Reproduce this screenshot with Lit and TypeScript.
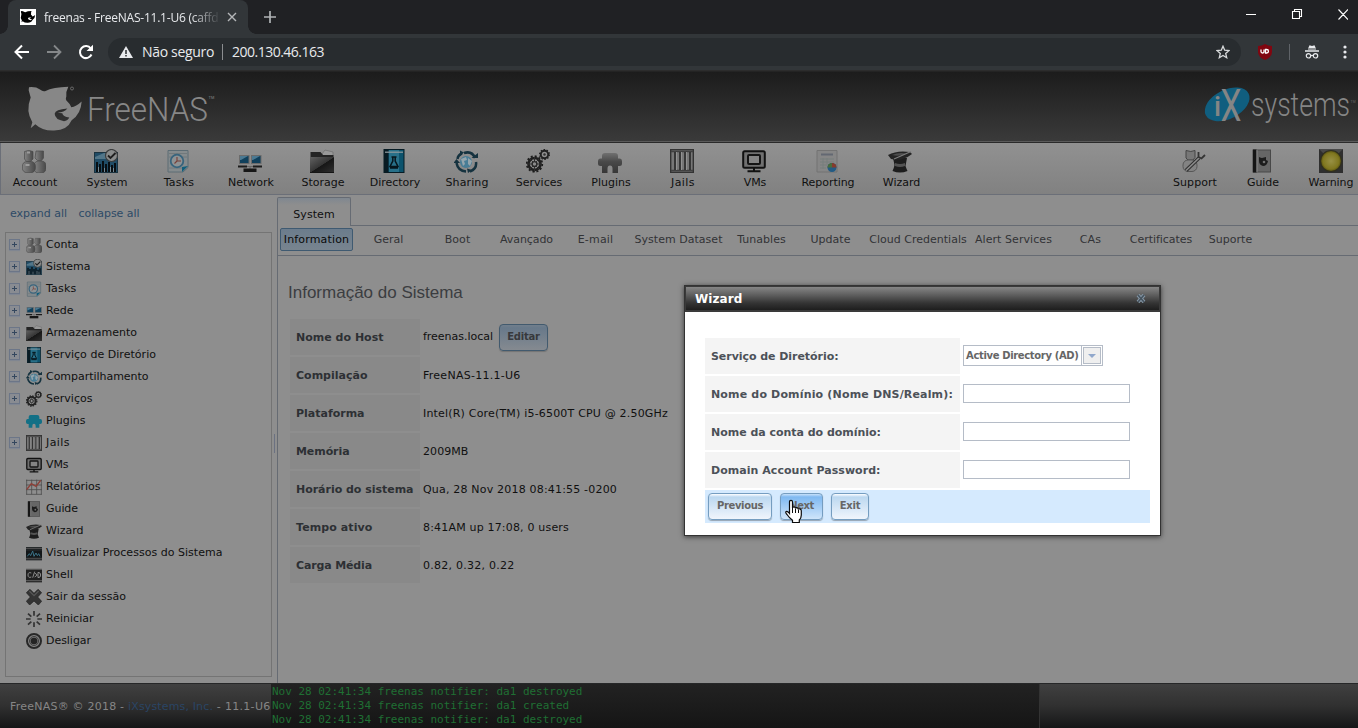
import { LitElement, html, svg, css, TemplateResult } from "lit";
import { customElement, property } from "lit/decorators.js";
import { styleMap } from "lit/directives/style-map.js";

const REG = '11px "DejaVu Sans"';
const BOLD = 'bold 11px "DejaVu Sans"';
const SMALL = 'bold 10px "DejaVu Sans"';
const CHROME = '"Open Sans"';

const ctx = document.createElement("canvas").getContext("2d")!;

// Tracks a label so that it takes the given advance width.
function fit(text: string, width: number, font = REG): TemplateResult {
  ctx.font = font;
  const gap = (width - ctx.measureText(text).width) / text.length;
  return html`<span style=${styleMap({ letterSpacing: gap.toFixed(3) + "px", whiteSpace: "pre" })}>${text}</span>`;
}

// Condenses a logo word horizontally to the given width.
function logoWord(text: string, x: number, y: number, width: number, size: number, weight = 300) {
  ctx.font = `${weight} ${size}px Roboto`;
  const k = width / ctx.measureText(text).width;
  return svg`<text transform=${`translate(${x} ${y}) scale(${k.toFixed(4)} 1)`} font-family="Roboto" font-weight=${weight} font-size=${size}>${text}</text>`;
}

const gearTeeth = (cx: number, cy: number, r: number, n: number, w: number) =>
  svg`<circle cx=${cx} cy=${cy} r=${r} fill="none" stroke="#1d1d1d" stroke-width=${w}
    stroke-dasharray=${`${(Math.PI * r) / n} ${(Math.PI * r) / n}`}/>`;

const ICONS: Record<string, unknown> = {
  account: svg`
    <defs><linearGradient id="ac" x1="0" x2="1"><stop offset="0" stop-color="#858585"/><stop offset="1" stop-color="#484848"/></linearGradient></defs>
    <g fill="url(#ac)" stroke="#4b4b4b" stroke-width=".7">
    <path d="M14 2h7.500v7l-2 2.500h-4L13 9z"/><rect x="12" y="12" width="12" height="12" rx="4.500"/>
    <path d="M2.500 2.500q4-2 8.500 0V10l-2.500 2.500h-4L2.500 10z"/><rect x=".4" y="12.500" width="13" height="11.200" rx="4.500"/></g>
    <path d="M5 3.500h3M3.500 16h4" stroke="#9c9c9c" stroke-width="2"/>`,
  system: svg`
    <rect x=".5" y="3.500" width="23" height="20" fill="#204c66" stroke="#1b3340"/>
    <path d="M1 8L10 4h13v6H1z" fill="#527689"/>
    <path d="M3 23V13M6 23V15M9 23V12M12 23V15M15 23V13M18 23V16M21 23V14" stroke="#080e12" stroke-width="2"/>
    <path d="M4.500 23V18M10.500 23V19M16.500 23V18M19.500 23v-4" stroke="#8a989e" stroke-width=".8"/>
    <circle cx="17.500" cy="6.500" r="6" fill="#898b8b" stroke="#3b3d3e" stroke-width="1.200"/>
    <path d="M14 6.500l2.500 2.500L21.500 4" fill="none" stroke="#1e1e1e" stroke-width="1.800"/>`,
  tasks: svg`
    <path d="M2 1.500h20v17l-5 4.500H2z" fill="#858b8d" stroke="#5c6c74"/>
    <path d="M3 4.500h18M3 8h18M3 19h13" stroke="#71797c"/>
    <circle cx="11" cy="12" r="6.300" fill="#8e9294" stroke="#38647d" stroke-width="1.800"/>
    <path d="M11 8v4h4M11 12l-2.500 2.500" fill="none" stroke="#773f38" stroke-width="1.100"/>
    <path d="M16 23v-5l6-1z" fill="#105e7c"/>`,
  network: svg`
    <rect x="1.500" y="6.500" width="9.500" height="8" fill="#10405c" stroke="#6b6b6b"/><rect x="13.500" y="6.500" width="9.500" height="8" fill="#10405c" stroke="#6b6b6b"/>
    <path d="M2 7h8l-7 4H2zM14 7h8l-7 4h-1z" fill="#4b7992"/>
    <path d="M0 17.500h9M15 17.500h9" stroke="#1c1c1c" stroke-width="1.800"/><path d="M9 17.500h6M12 17v4" stroke="#656565"/>
    <rect x="5.500" y="19.500" width="13" height="3.500" fill="#171717"/>`,
  storage: svg`
    <defs><linearGradient id="st" x1="0" x2="1" y1="0" y2="1"><stop offset="0" stop-color="#626262"/><stop offset=".5" stop-color="#353535"/><stop offset=".52" stop-color="#161616"/><stop offset="1" stop-color="#303030"/></linearGradient></defs>
    <path d="M12 5l3-4 8 2v6H12z" fill="#999" stroke="#666" stroke-width=".6"/>
    <path d="M.5 3h10l2.500 3H23.500V9H.5z" fill="#242424"/><rect y="8" width="24" height="15.500" fill="url(#st)"/><path d="M0 23.500h24" stroke="#151515"/>`,
  directory: svg`
    <rect x="2" y=".5" width="20" height="23" fill="#0c536d" stroke="#071c25"/><path d="M7 1h10v22H7z" fill="#287089"/>
    <path d="M2 .5h4.500V24H2z" fill="#081b23"/><path d="M3 3.200h18" stroke="#89979b" stroke-width="1.300"/>
    <path d="M9.500 8h5M10.800 8v4L8 17.500h8L13.200 12V8M8 19h8" fill="none" stroke="#06161d" stroke-width="1.500"/>`,
  sharing: svg`
    <circle cx="12" cy="13" r="6" fill="#487d96"/><path d="M7 10l5-2 1 3-3 1 1 3-2 2zM14 9l4 3-2 5-2-2z" fill="#94a5ad"/>
    <path d="M10 4q8-2.500 11 5M22 13q1 7-6 9.500M12 22.500Q4 22 2.500 14M3.500 10Q4 6 8 4.500" fill="none" stroke="#15323f" stroke-width="2.500"/>
    <path d="M17.500 9h6.500v-5zM13 19.500l1 4.500 4-3zM-.5 14l3-4 3.500 4zM6 1.500v5.500l4-3.500z" fill="#15323f"/>`,
  services: svg`
    <circle cx="8.500" cy="15" r="6" fill="none" stroke="#202020" stroke-width="2.700"/>${gearTeeth(8.5, 15, 7.8, 12, 1.7)}
    <circle cx="8.500" cy="15" r="2.400" fill="none" stroke="#292929" stroke-width="1.400"/><path d="M8.500 8v4M8.500 18v5M2 15h4M11 15h4M4 10l3 3M10 17l3 3M13 10l-3 3M4 20l3-3" stroke="#303030"/>
    <circle cx="18.500" cy="5.500" r="3.700" fill="none" stroke="#202020" stroke-width="1.900"/>${gearTeeth(18.5, 5.5, 4.9, 10, 1.2)}<circle cx="18.500" cy="5.500" r="1.200" fill="#333"/>`,
  plugins: svg`
    <defs><linearGradient id="pg" x2="0" y2="1"><stop offset="0" stop-color="#707070"/><stop offset=".45" stop-color="#484848"/><stop offset="1" stop-color="#373737"/></linearGradient></defs>
    <path d="M4 9.500V7q0-3 3-3h10q3 0 3 3v2.500h1.500q2.500 0 2.500 3v2q0 2.500-2.500 2.500H20v7h-5.500v-4.500q0-3-2.500-3t-2.500 3V24H4v-7H2.500Q0 17 0 14.500v-2q0-3 2.500-3z" fill="url(#pg)"/>`,
  pluginsBlue: svg`
    <path d="M4 9V6q0-3 3-3h10q3 0 3 3v3h1.500q2.500 0 2.500 3v2q0 2.500-2.500 2.500H20V22h-5.500v-3q0-3-2.500-3t-2.500 3v3H4v-5.500H2.500Q0 16.500 0 14v-2q0-3 2.500-3z" fill="#127086"/>`,
  jails: svg`
    <rect x=".7" y=".7" width="22.600" height="22.600" fill="#777" stroke="#333" stroke-width="1.400"/><path d="M1 2.500h22M1 21.500h22" stroke="#414141" stroke-width="1.300"/>
    <path d="M5 3v18M10 3v18M15 3v18M20 3v18" stroke="#303030" stroke-width="1.800"/><path d="M6.500 3v18M11.500 3v18M16.500 3v18" stroke="#929292"/>`,
  vms: svg`
    <rect x="1.200" y="2.200" width="21.600" height="16.600" rx="1.500" fill="#707070" stroke="#111" stroke-width="2"/>
    <rect x="6" y="6" width="12" height="9" rx="1" fill="#848484" stroke="#151515" stroke-width="2"/><path d="M12 19v3M5.500 22.300h13" stroke="#111" stroke-width="2"/>`,
  reporting: svg`
    <path d="M2 1.500h20V23H2z" fill="#868686" stroke="#737373"/><path d="M6 5.500h12" stroke="#636872" stroke-width="2"/>
    <path d="M5 10h14M5 13h14M5 16h7M5 19h6M8 9v11M12 9v6" stroke="#777e7d"/>
    <circle cx="17" cy="18.500" r="4.500" fill="#235b84"/><path d="M17 18.500V14a4.500 4.500 0 0 1 4.500 4.500z" fill="#863a2c"/><path d="M17 18.500h-4.500A4.500 4.500 0 0 1 17 14z" fill="#486d3c"/>`,
  graph: svg`
    <path d="M1 1v22M8.500 1v22M16 1v22M23 1v22M0 2h24M0 9h24M0 16h24M0 23h24" stroke="#4c4c4c" stroke-width="1.200"/><path d="M1 16l7-9 7 4 7-9" fill="none" stroke="#8e3f37" stroke-width="2.200"/>`,
  wizard: svg`
    <path d="M5 9h14l-1.500 8q1 3 2 5-7.500 3-15 0Q6 19 6.500 16z" fill="#1d1d1d"/><path d="M7 14q5 2 10 0v3q-5 2-10 0z" fill="#535353"/>
    <path d="M0 6q9-5 22-3l2 2Q14 13 3 10z" fill="#242424"/><path d="M4 6q7-3 14-1.500-6 3.500-14 1.500z" fill="#4d4d4d"/><path d="M6 10L23 2.500" stroke="#7d7d7d" stroke-width="1.200"/>`,
  support: svg`
    <path d="M4 1.500q5 2 9 0v7l-2 2.500H6L4 9z" fill="#777" stroke="#454545"/><rect x="1" y="11" width="14" height="11.500" rx="5" fill="#838383" stroke="#575757"/>
    <path d="M4 21.500L17 9" stroke="#303030" stroke-width="3.800"/><path d="M4 21.500L17 9" stroke="#8d8d8d" stroke-width="1.600"/>
    <path d="M16.500 3v5l3 1.500L23 6" fill="none" stroke="#343434" stroke-width="1.800"/>`,
  guide: svg`
    <rect x="3" y="1" width="17.500" height="22" fill="#666" stroke="#484848"/><path d="M3 .500h3.500v23H3z" fill="#151515"/><path d="M7 1v22" stroke="#888"/>
    <path d="M9 8q2 1 3 1l4-1v3l2 1q-1 5-5 5-4-1-4-5z" fill="#1c1c1c"/><circle cx="14" cy="13" r="1.300" fill="#707070"/>`,
  warning: svg`
    <defs><radialGradient id="wr"><stop offset="0" stop-color="#989044"/><stop offset=".75" stop-color="#80771f"/><stop offset="1" stop-color="#56500f"/></radialGradient></defs>
    <path d="M0 0h24v24H0z" fill="#2f2f2f"/><path d="M0 0h24L12 12z" fill="#494949"/><circle cx="12" cy="12" r="10.500" fill="url(#wr)" stroke="#302f1f" stroke-width="1.200"/>`,
  processes: svg`
    <path d="M0 3h24v20H0z" fill="#1e2224"/><path d="M0 5h24" stroke="#555" stroke-width="1.500"/><path d="M0 9h24v9H0z" fill="#131719"/>
    <path d="M2 17l3-4 2 3 3-7 2 8 3-5 2 4 2-3 2 4" fill="none" stroke="#3b7286" stroke-width="1.500"/><path d="M0 20.500h24" stroke="#464646" stroke-width="2"/>`,
  shell: svg`
    <path d="M0 3h24v20H0z" fill="#202020"/><path d="M0 3.500h24M0 20.500h24" stroke="#565656" stroke-width="2"/>
    <path d="M8 9Q3 7 3 12t5 3M10 16l3-9M13 9l4 3-4 3M18 8v8M18 8q4 0 4 4t-4 4" fill="none" stroke="#8b8b8b" stroke-width="1.500"/>`,
  logout: svg`
    <path d="M6 .500l6 6 6-6 5.500 5-6 6.500 6 6.500-5 5.500-6.500-6-6.500 6L.5 18.500l6-6.500-6-6.500z" fill="#343434" stroke="#202020"/><path d="M5 3l7 7 7-7" fill="none" stroke="#565656" stroke-width="2"/>`,
  restart: svg`
    <path d="M12 0v7M12 17v7M0 12h7M17 12h7M3 4l5 4.500M16 16l5 4.500M21 4l-5 4.500M8 16l-5 4.500" stroke="#343434" stroke-width="2.600"/>`,
  power: svg`
    <circle cx="12" cy="12" r="10.500" fill="#858585" stroke="#282828" stroke-width="3"/><circle cx="12" cy="12" r="6.800" fill="#747474" stroke="#333" stroke-width="1.200"/><circle cx="12" cy="12" r="5" fill="#242424"/>`,
};

@customElement("nas-icon")
class NasIcon extends LitElement {
  @property() name = "";
  @property({ type: Number }) size = 24;
  static styles = css`
    :host { display: block; flex: none; line-height: 0; }
  `;
  render() {
    return html`<svg width=${this.size} height=${this.size} viewBox="0 0 24 24">${ICONS[this.name]}</svg>`;
  }
}

const NAV: [string, string, number, number][] = [
  ["account", "Account", 44.5, 72], ["system", "System", 41, 72], ["tasks", "Tasks", 30.5, 72],
  ["network", "Network", 46, 72], ["storage", "Storage", 43, 72], ["directory", "Directory", 50.5, 72],
  ["sharing", "Sharing", 43, 72], ["services", "Services", 46.5, 72], ["plugins", "Plugins", 39.5, 72],
  ["jails", "Jails", 24, 72], ["vms", "VMs", 22.5, 72], ["reporting", "Reporting", 53, 74],
  ["wizard", "Wizard", 37.5, 73],
];
const NAV_RIGHT: [string, string, number, number][] = [
  ["support", "Support", 44, 68], ["guide", "Guide", 32, 68], ["warning", "Warning", 45, 68],
];
const TREE: [string, string, number, boolean][] = [
  ["account", "Conta", 32.5, true], ["system", "Sistema", 44.5, true], ["tasks", "Tasks", 30.5, true],
  ["network", "Rede", 27.5, true], ["storage", "Armazenamento", 91, true], ["directory", "Serviço de Diretório", 110, true],
  ["sharing", "Compartilhamento", 102.5, true], ["services", "Serviços", 46.5, true], ["pluginsBlue", "Plugins", 39.5, false],
  ["jails", "Jails", 24, true], ["vms", "VMs", 22.5, false], ["graph", "Relatórios", 54.5, false],
  ["guide", "Guide", 32, false], ["wizard", "Wizard", 37.5, false],
  ["processes", "Visualizar Processos do Sistema", 176.5, false], ["shell", "Shell", 27, false],
  ["logout", "Sair da sessão", 80, false], ["restart", "Reiniciar", 47.5, false], ["power", "Desligar", 45, false],
];
const SUBTABS: [string, number, number][] = [
  ["Geral", 29.5, 69], ["Boot", 25.5, 69], ["Avançado", 53, 69], ["E-mail", 35.5, 69], ["System Dataset", 88, 97],
  ["Tunables", 48.5, 69], ["Update", 40, 69], ["Cloud Credentials", 97.5, 106], ["Alert Services", 77, 85],
  ["CAs", 21.5, 69], ["Certificates", 62.5, 72], ["Suporte", 43.5, 67],
];
const INFO: [string, number, string, number][] = [
  ["Nome do Host", 87.5, "freenas.local", 70], ["Compilação", 71.5, "FreeNAS-11.1-U6", 97.5],
  ["Plataforma", 68.5, "Intel(R) Core(TM) i5-6500T CPU @ 2.50GHz", 245], ["Memória", 53.5, "2009MB", 45.5],
  ["Horário do sistema", 117.5, "Qua, 28 Nov 2018 08:41:55 -0200", 194], ["Tempo ativo", 76.500, "8:41AM up 17:08, 0 users", 146],
  ["Carga Média", 76, "0.82, 0.32, 0.22", 91.5],
];
const FIELDS: [string, number][] = [
  ["Nome do Domínio (Nome DNS/Realm):", 242], ["Nome da conta do domínio:", 170], ["Domain Account Password:", 169.5],
];
const SHARK = svg`<path fill-rule="evenodd" d="M3 2Q24 0 36 9q8 7 15 5Q76 2 121 1q-8 15-6 29-4 9 3 15 10 9 12 17 14-1 31-17-2 38-30 56-13 30-52 31-35 2-57-19L8 125l5-18Q-8 74 8 33L2 11zM118 66Q82 69 80 82q1 18 28 22 12-2 16-11-20-3-21-13-10 0-14-1 20-2 29-13z"/>`;

@customElement("chrome-bar")
class ChromeBar extends LitElement {
  static styles = css`
    :host { display: block; height: 72px; background: #202124; font-family: "Open Sans", "Noto Sans", sans-serif; color: #e8eaed; }
    .strip { display: flex; height: 34px; align-items: stretch; }
    .tab { width: 240px; margin-left: 8px; border-radius: 8px 8px 0 0; background: #323639; display: flex; align-items: center; box-sizing: border-box; padding-left: 12px; font-size: 12px; position: relative; }
    .tab::after, .tab::before { content: ""; position: absolute; bottom: 0; width: 8px; height: 8px; }
    .tab::after { left: 100%; background: radial-gradient(circle at 100% 0, #202124 7.500px, #323639 8px); }
    .tab::before { right: 100%; background: radial-gradient(circle at 0 0, #202124 7.500px, #323639 8px); }
    .fav { background: #fff; width: 16px; height: 16px; margin-right: 8px; }
    .title { width: 175px; overflow: hidden; -webkit-mask-image: linear-gradient(90deg, #000 84%, transparent 101%); }
    .x { margin-left: 8px; }
    .plus { margin: 11px 0 0 16px; }
    .win { margin-left: auto; padding: 8px 10px 0 0; display: flex; gap: 34px; }
    .bar { display: flex; align-items: center; height: 36px; background: #323639; padding-left: 14px; }
    .arrows { display: flex; gap: 16px; width: 94px; }
    .omni { width: 1133px; height: 28px; border-radius: 14px; background: #282c2f; display: flex; align-items: center; box-sizing: border-box; padding: 0 11px; font-size: 14px; white-space: nowrap; }
    .omni span { padding-bottom: 1px; }
    .pad { width: 9px; }
    .omni .sep { width: 1px; height: 15px; background: #8b8d90; margin: 0 9px 0 8px; }
    .star { margin-left: auto; }
    .ext { display: flex; align-items: center; margin-left: 16px; }
    .vr { width: 1px; height: 16px; background: #5f6368; margin: 0 15px 0 16px; }
    .dots { margin-left: 24px; }
    .edge { height: 2px; background: linear-gradient(#2c2c2c 50%, #242424 50%); }
  `;
  render() {
    return html`
      <div class="strip">
        <div class="tab">
          <svg class="fav" viewBox="-8 -15 178 164" fill="#000">${SHARK}</svg>
          <div class="title">${fit("freenas - FreeNAS-11.1-U6 (caffd", 174.5, "12px " + CHROME)}</div>
          <svg class="x" width="10" height="10"><path d="M1 1l8 8M9 1l-8 8" stroke="#b5b7b9" stroke-width="1.400"/></svg>
        </div>
        <svg class="plus" width="12" height="12"><path d="M6 0v12M0 6h12" stroke="#b0b3b5" stroke-width="1.700"/></svg>
        <svg class="win" width="102" height="14" viewBox="0 0 102 14"><path d="M0 6.500h10M92.500 1.500l9.500 10M102 1.500l-9.500 10M46.500 3.500h7v7h-7zM48.500 3v-1.500h7v7H54" fill="none" stroke="#fff" stroke-width="1.100"/></svg>
      </div>
      <div class="bar">
        <div class="arrows">
          <svg width="16" height="16"><path d="M15 8H2M8 1.500L1.500 8 8 14.500" fill="none" stroke="#fff" stroke-width="2"/></svg>
          <svg width="16" height="16"><path d="M1 8h13M8 1.500L14.500 8 8 14.500" fill="none" stroke="#85888a" stroke-width="1.800"/></svg>
          <svg width="16" height="16"><path d="M13.500 10.500a6 6 0 1 1-.7-6" fill="none" stroke="#fff" stroke-width="2"/><path d="M15 .8v6.200H8.500z" fill="#fff"/></svg>
        </div>
        <div class="omni">
          <svg width="14" height="12"><path d="M7 0l7 12H0z" fill="#e8eaed"/><path d="M7 4v4M7 9v1.600" stroke="#282c2f" stroke-width="1.500"/></svg>
          <span class="pad"></span>${fit("Não seguro", 72, "14px " + CHROME)}<span class="sep"></span>${fit("200.130.46.163", 92, "14px " + CHROME)}
          <svg class="star" width="14" height="14"><path d="M7 1.200l1.700 4 4.300.4-3.300 2.800 1 4.300L7 10.500l-3.700 2.200 1-4.300L1 5.600l4.300-.4z" fill="none" stroke="#d8dadc" stroke-width="1.300"/></svg>
        </div>
        <div class="ext">
          <svg width="16" height="16" viewBox="0 0 16 16"><path d="M8 0q3 2 7 2v6q0 5-7 8-7-3-7-8V2q4 0 7-2z" fill="#800610"/><path d="M4 5.500v2q0 1.500 1.500 1.500T7 7.500v-2M8.500 5.500V9h1.200a1.700 1.700 0 0 0 0-3.500z" fill="none" stroke="#fff" stroke-width="1.300"/></svg>
          <span class="vr"></span>
          <svg width="14" height="14" viewBox="0 0 14 14"><path d="M3.300 3L4.500.300 7 1l2.500-.7L10.700 3zM0 5.300h14v1.400H0z" fill="#e8eaed"/><path d="M3 4h8" stroke="#e8eaed"/><g fill="none" stroke="#e8eaed" stroke-width="1.200"><circle cx="3.500" cy="10.800" r="2.200"/><circle cx="10.500" cy="10.800" r="2.200"/><path d="M5.700 10.500h2.600"/></g></svg>
          <svg class="dots" width="4" height="14"><g fill="#e8eaed"><circle cx="2" cy="2" r="1.600"/><circle cx="2" cy="7" r="1.600"/><circle cx="2" cy="12" r="1.600"/></g></svg>
        </div>
      </div>
      <div class="edge"></div>`;
  }
}

@customElement("wizard-dialog")
class WizardDialog extends LitElement {
  static styles = css`
    :host { display: block; box-sizing: border-box; width: 477px; height: 251px; border: 1px solid #333; background: #fff; box-shadow: 0 1px 5px rgba(0,0,0,.6); font: 11px "DejaVu Sans", sans-serif; }
    .bar { height: 26px; box-sizing: border-box; border: 1px solid #3a3a3a; border-width: 1px 1px 2px; background: linear-gradient(#868686, #5e5e5e 35%, #343434 70%, #1e1e1e); display: flex; align-items: center; justify-content: space-between; padding: 0 13px 0 9px; color: #fff; font: bold 12px "DejaVu Sans", sans-serif; }
    .grid { display: grid; grid-template-columns: 255px 1fr; grid-auto-rows: 36px; row-gap: 2px; column-gap: 3px; margin: 26px 10px 0 20px; align-items: center; }
    .lab { height: 36px; line-height: 37px; background: #f4f4f4; padding-left: 6px; color: #4c5158; font-weight: bold; white-space: nowrap; }
    .in { width: 167px; height: 19px; box-sizing: border-box; border: 1px solid #b5bcc7; margin-bottom: 2px; }
    .sel { width: 140px; height: 21px; box-sizing: border-box; border: 1px solid #b5bcc7; display: flex; align-items: center; font: bold 10px "DejaVu Sans", sans-serif; color: #666; margin-top: -1px; white-space: nowrap; }
    .txt { width: 118px; padding-left: 2px; box-sizing: border-box; line-height: 19px; border-right: 1px solid #b5bcc7; flex: none; }
    .drop { width: 18px; height: 17px; box-sizing: border-box; border: 1px solid #b5bcc7; margin-left: 1px; background: #efefef; display: grid; place-items: center; }
    .acts { display: flex; gap: 8px; padding: 3px; height: 33px; box-sizing: border-box; background: #d5eafe; margin: 2px 10px 0 20px; }
    .btn { box-sizing: border-box; height: 27px; border: 1px solid #759dc0; border-radius: 4px; background: linear-gradient(#fff 0, #d8e9f8 7%, #bcd8f0 12%, #f0f5fc 100%); display: flex; justify-content: center; font: bold 10px/24px "DejaVu Sans", sans-serif; color: #666; box-shadow: 0 1px 1px rgba(0,0,0,.3); }
    .hot { background: linear-gradient(#c8e1fa 0, #7fb9f1 12%, #cfe5fa); }
    .b0 { width: 64px; } .b1 { width: 43px; } .b2 { width: 38px; }
  `;
  render() {
    return html`
      <div class="bar">${fit("Wizard", 47.5, 'bold 12px "DejaVu Sans"')}
        <svg width="10" height="9"><path d="M2 1l6 7M8 1L2 8" stroke="#8496a5" stroke-width="3.600"/><path d="M2 1l6 7M8 1L2 8" stroke="#46535e" stroke-width="1.600"/></svg></div>
      <div class="grid">
        <div class="lab">${fit("Serviço de Diretório:", 127.5, BOLD)}</div>
        <div class="sel"><div class="txt">${fit("Active Directory (AD)", 112.5, SMALL)}</div><div class="drop"><svg width="8" height="4"><path d="M0 0h8L4 4z" fill="#91a8cc"/></svg></div></div>
        ${FIELDS.map(([t, w]) => html`<div class="lab">${fit(t, w, BOLD)}</div><div class="in"></div>`)}
      </div>
      <div class="acts"><div class="btn b0">${fit("Previous", 46, SMALL)}</div><div class="btn hot b1">${fit("Next", 24.5, SMALL)}</div><div class="btn b2">${fit("Exit", 20.5, SMALL)}</div></div>`;
  }
}

@customElement("app-root")
class AppRoot extends LitElement {
  static styles = css`
    :host { display: block; position: relative; width: 1358px; height: 728px; overflow: hidden; background: #8e8e8e; font: 11px "DejaVu Sans", sans-serif; color: #101010; }
    .head { height: 69px; background: linear-gradient(#1c1c1c, #3a3a3a); display: flex; justify-content: space-between; }
    .rule { height: 2px; background: linear-gradient(#5b5b5b 50%, #2b2b2b 50%); }
    .nav { height: 52px; box-sizing: border-box; border-bottom: 1px solid #6b6f78; border-left: 1px solid #6b6f78; background: linear-gradient(#919191, #818181); display: flex; }
    .group { display: flex; margin-left: -2px; }
    .right { margin-left: auto; margin-right: -7px; }
    .item { display: flex; flex-direction: column; align-items: center; padding-top: 6px; line-height: 20px; }
    .item nas-icon { margin-right: 3px; }
    .right .item:last-child nas-icon { margin-right: 0; }
    .main { display: flex; height: 488px; }
    .side { width: 272px; flex: none; box-sizing: border-box; padding-left: 5px; }
    .links { display: flex; gap: 11.500px; padding: 12px 0 0 5px; height: 25px; line-height: 14px; color: #2d4a66; }
    .tree { width: 267px; height: 445px; box-sizing: border-box; border: 1px solid #747474; }
    .row { display: flex; align-items: center; height: 22px; padding-left: 3px; }
    .exp { width: 11px; height: 11px; box-sizing: border-box; border: 1px solid #6c7688; margin-right: 6px; box-shadow: 0 1px 1px #808691; background: linear-gradient(#34475e,#34475e) 50% 50%/5px 1px no-repeat, linear-gradient(#34475e,#34475e) 50% 50%/1px 5px no-repeat, #898c92; margin-top: 1px; }
    .none { visibility: hidden; }
    .row nas-icon { margin: 2px 4px 0 0; }
    .split { width: 5px; display: flex; align-items: center; justify-content: center; }
    .grip { width: 1px; height: 19px; background: #6b7181; margin-top: 9px; }
    .pane { flex: 1; display: flex; flex-direction: column; padding-top: 2px; }
    .tabs { display: flex; height: 29px; }
    .tab { width: 74px; box-sizing: border-box; border: 1px solid #666b73; border-bottom: 0; text-align: center; line-height: 33px; background: linear-gradient(#7f8790, #8e8e8e 7px); border-radius: 2px 2px 0 0; }
    .fill { flex: 1; border-bottom: 1px solid #666b73; }
    .subs { display: flex; height: 30px; box-sizing: border-box; border-left: 1px solid #666b73; border-bottom: 1px solid #666b73; padding: 2px 0 0 2px; color: #323336; }
    .info { width: 73px; height: 23px; box-sizing: border-box; border: 1px solid #3f5a71; border-radius: 2px; background: linear-gradient(#6b7c8c, #78848f); text-align: center; line-height: 21px; color: #090909; margin-right: 1px; }
    .sub { text-align: center; line-height: 23px; white-space: nowrap; }
    .body { flex: 1; border-left: 1px solid #666b73; padding: 26px 0 0 10px; }
    .h { font: 17px/22px "Liberation Sans", sans-serif; color: #3b3d41; white-space: nowrap; }
    .tbl { display: flex; flex-direction: column; gap: 2px; margin: 15px 0 0 2px; }
    .tr { display: flex; height: 36px; align-items: center; gap: 3px; }
    .tr:first-child > span { margin-bottom: 2px; }
    .th { width: 130px; height: 36px; line-height: 37px; box-sizing: border-box; padding-left: 6px; background: #898989; font-weight: bold; color: #2d3034; white-space: nowrap; }
    .edit { width: 49px; height: 27px; box-sizing: border-box; border: 1px solid #425a6e; border-radius: 4px; background: linear-gradient(#727f8c, #68798a 12%, #858a90); font: bold 10px/24px "DejaVu Sans", sans-serif; color: #37393c; text-align: center; margin: 1px 0 0 3px; box-shadow: 0 1px 1px #747474; }
    .foot { height: 45px; box-sizing: border-box; border-top: 1px solid #262728; background: linear-gradient(#404040, #303030 50%, #151617); display: flex; color: #868686; }
    .copy { width: 271px; box-sizing: border-box; padding-left: 10px; line-height: 45px; flex: none; white-space: nowrap; }
    .ix { color: #2a4565; }
    .log { width: 769px; box-sizing: border-box; background: linear-gradient(#222, #151515); border-right: 1px solid #333; color: #1f6f33; font: 11px/14px "DejaVu Sans Mono", monospace; letter-spacing: -.02px; padding: 1px 0 0 1px; white-space: pre; }
    .dlg { position: absolute; left: 684px; top: 285px; }
    .cur { position: absolute; left: 784px; top: 499px; }
  `;
  nav(items: [string, string, number, number][]) {
    return items.map(([ic, t, w, cell]) => html`<div class="item" style=${styleMap({ width: cell + "px" })}><nas-icon name=${ic}></nas-icon>${fit(t, w)}</div>`);
  }
  render() {
    return html`
      <chrome-bar></chrome-bar>
      <div class="head">
        <svg width="230" height="69" viewBox="0 72 230 69" fill="#878787">
          <g transform="translate(28 86.500) scale(.3333)">${SHARK}</g><circle cx="72" cy="88.500" r="1.500" fill="none" stroke="#777" stroke-width=".8"/>
          ${logoWord("FreeNAS", 87, 121, 121, 33.5)}
          <text x="208.500" y="99" font-family="Liberation Sans" font-size="4">TM</text>
        </svg>
        <svg width="160" height="69" viewBox="1198 72 160 69" fill="#858585">
          <ellipse cx="1227.200" cy="104.300" rx="24" ry="14.500" transform="rotate(-27 1227.200 104.300)" fill="#105e7f"/>
          ${logoWord("i", 1214, 116, 7, 27, 500)}
          ${logoWord("X", 1220.5, 120.5, 21, 45, 400)}
          ${logoWord("systems", 1251, 115.5, 99, 34)}
          <text x="1350.500" y="103" font-family="Liberation Sans" font-size="3.500" fill="#666">TM</text>
        </svg>
      </div>
      <div class="rule"></div>
      <div class="nav"><div class="group">${this.nav(NAV)}</div><div class="group right">${this.nav(NAV_RIGHT)}</div></div>
      <div class="main">
        <div class="side">
          <div class="links">${fit("expand all", 57)}${fit("collapse all", 61)}</div>
          <div class="tree">${TREE.map(([ic, t, w, e]) => html`<div class="row"><span class="exp ${e ? "" : "none"}"></span><nas-icon name=${ic} .size=${16}></nas-icon>${fit(t, w)}</div>`)}</div>
        </div>
        <div class="split"><div class="grip"></div></div>
        <div class="pane">
          <div class="tabs"><div class="tab">${fit("System", 41.5)}</div><div class="fill"></div></div>
          <div class="subs"><div class="info">${fit("Information", 65.5)}</div>${SUBTABS.map(([t, w, cell]) => html`<div class="sub" style=${styleMap({ width: cell + "px" })}>${fit(t, w)}</div>`)}</div>
          <div class="body">
            <div class="h">Informação do Sistema</div>
            <div class="tbl">${INFO.map(([k, kw, v, vw], i) => html`<div class="tr"><div class="th">${fit(k, kw, BOLD)}</div>${fit(v, vw)}${i === 0 ? html`<div class="edit">${fit("Editar", 32.5, SMALL)}</div>` : ""}</div>`)}</div>
          </div>
        </div>
      </div>
      <div class="foot">
        <div class="copy">${fit("FreeNAS® © 2018 - ", 118)}<span class="ix">${fit("iXsystems, Inc.", 85)}</span>${fit(" - 11.1-U6", 57.5)}</div>
        <div class="log"><div>Nov 28 02:41:34 freenas notifier: da1 destroyed</div><div>Nov 28 02:41:34 freenas notifier: da1 created</div><div>Nov 28 02:41:34 freenas notifier: da1 destroyed</div></div>
      </div>
      <wizard-dialog class="dlg"></wizard-dialog>
      <svg class="cur" width="19" height="25" viewBox="0 0 19 25"><path d="M5.500 14.500V3q0-1.700 1.500-1.700T8.500 3v6q.2-1.300 1.500-1.200 1.400.1 1.500 1.700.3-1 1.500-.8 1.300.3 1.300 1.700.4-.8 1.400-.6 1.600.3 1.600 2v4.200q0 3-2 5v2.500H8.500v-2.200Q5 18.500 3 15.500q-2-2.300-.8-3t3.300 2z" fill="#fff" stroke="#0b0b0b" stroke-width="1.200"/><path d="M8.500 9v5M11.500 10v4M14.500 11v3" stroke="#0b0b0b"/></svg>`;
  }
}
